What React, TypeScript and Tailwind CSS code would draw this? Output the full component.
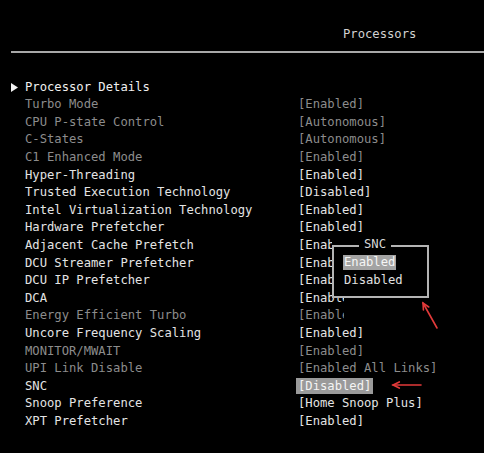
import React from 'react';

type Row = { label: string; value?: string; dim?: boolean; selected?: boolean };

// Setup items shown on the Processors page
const rows: Row[] = [
  { label: 'Processor Details' },
  { label: 'Turbo Mode', value: '[Enabled]', dim: true },
  { label: 'CPU P-state Control', value: '[Autonomous]', dim: true },
  { label: 'C-States', value: '[Autonomous]', dim: true },
  { label: 'C1 Enhanced Mode', value: '[Enabled]', dim: true },
  { label: 'Hyper-Threading', value: '[Enabled]' },
  { label: 'Trusted Execution Technology', value: '[Disabled]' },
  { label: 'Intel Virtualization Technology', value: '[Enabled]' },
  { label: 'Hardware Prefetcher', value: '[Enabled]' },
  { label: 'Adjacent Cache Prefetch', value: '[Enabled]' },
  { label: 'DCU Streamer Prefetcher', value: '[Enabled]' },
  { label: 'DCU IP Prefetcher', value: '[Enabled]' },
  { label: 'DCA', value: '[Enabled]' },
  { label: 'Energy Efficient Turbo', value: '[Enabled]', dim: true },
  { label: 'Uncore Frequency Scaling', value: '[Enabled]' },
  { label: 'MONITOR/MWAIT', value: '[Enabled]', dim: true },
  { label: 'UPI Link Disable', value: '[Enabled All Links]', dim: true },
  { label: 'SNC', value: '[Disabled]', selected: true },
  { label: 'Snoop Preference', value: '[Home Snoop Plus]' },
  { label: 'XPT Prefetcher', value: '[Enabled]' },
];

function SettingRow({ row, first }: { row: Row; first: boolean }) {
  const tone = row.dim ? 'text-[#8c8c8c]' : 'text-[#e4e4e4]';
  return (
    <div className="flex h-[17.6px] items-center">
      <div className="w-[25px] flex items-center pl-[11px]">
        {first && (
          <svg width="7" height="9" viewBox="0 0 7 9">
            <path d="M0 0 L7 4.5 L0 9 Z" fill="#f2f2f2" />
          </svg>
        )}
      </div>
      <div className={`w-[273px] ${first ? 'text-[#f0f0f0]' : tone}`}>{row.label}</div>
      {row.value && (
        <div
          className={
            row.selected
              ? 'bg-[#9a9a9a] text-[#f4f4f4] px-[2px] -ml-[2px] leading-[16px]'
              : tone
          }
        >
          {row.value}
        </div>
      )}
    </div>
  );
}

function Arrow({ x1, y1, x2, y2 }: { x1: number; y1: number; x2: number; y2: number }) {
  // red pointer from (x1,y1) with its head at (x2,y2)
  const a = Math.atan2(y2 - y1, x2 - x1);
  const h = 7;
  const p1 = [x2 - h * Math.cos(a - 0.45), y2 - h * Math.sin(a - 0.45)];
  const p2 = [x2 - h * Math.cos(a + 0.45), y2 - h * Math.sin(a + 0.45)];
  return (
    <g stroke="#e23a3a" strokeWidth="1.6" fill="none" strokeLinecap="round">
      <line x1={x1} y1={y1} x2={x2} y2={y2} />
      <polyline points={`${p1[0]},${p1[1]} ${x2},${y2} ${p2[0]},${p2[1]}`} />
    </g>
  );
}

export default function App() {
  return (
    <div
      className="relative w-[484px] h-[453px] bg-black overflow-hidden text-[12.2px] leading-[17.6px]"
      style={{ fontFamily: '"DejaVu Sans Mono", "Liberation Mono", monospace' }}
    >
      {/* Page title */}
      <div className="pt-[26px] pl-[343px] text-[#d2d2d2]">Processors</div>
      <div className="mt-[7px] ml-[11px] h-[2px] bg-[#a8a8a8]" />

      {/* Settings list */}
      <div className="mt-[26px]">
        {rows.map((r, i) => (
          <SettingRow key={r.label} row={r} first={i === 0} />
        ))}
      </div>

      {/* Option popup shadow */}
      <div className="absolute left-[344px] top-[298px] w-[98px] h-[25px] bg-black" />

      {/* SNC option popup */}
      <div className="absolute left-[332px] top-[237px] w-[97px] bg-black flex flex-col">
        <div className="flex items-center h-[16px]">
          <div className="w-[27px] h-[2px] mt-[1px] bg-[#b4b4b4] self-center" />
          <span className="px-[5px] text-[#d8d8d8]">SNC</span>
          <div className="flex-1 h-[2px] mt-[1px] bg-[#b4b4b4] self-center" />
        </div>
        <div className="-mt-[7px] h-[52px] border-2 border-t-0 border-[#b4b4b4] pl-[9px] pt-[9px] flex flex-col items-start gap-[2px]">
          <span className="bg-[#a3a3a3] text-[#f6f6f6] px-[1px] leading-[15px]">Enabled</span>
          <span className="text-[#e0e0e0] pl-[1px]">Disabled</span>
        </div>
      </div>

      {/* Red annotation arrows */}
      <svg className="absolute inset-0" width="484" height="453">
        <Arrow x1={437} y1={328} x2={423} y2={303} />
        <Arrow x1={421} y1={385} x2={393} y2={385} />
      </svg>
    </div>
  );
}
